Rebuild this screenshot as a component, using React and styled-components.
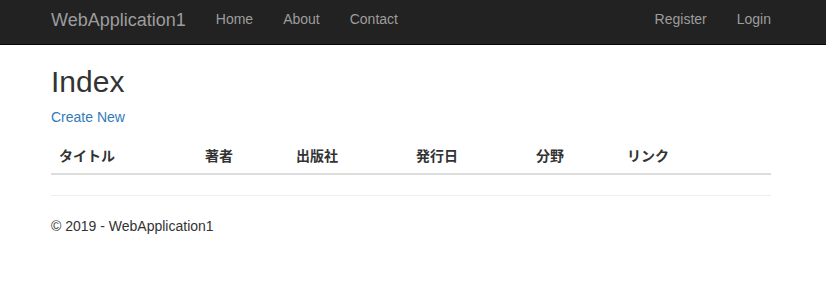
import React from "react";
import styled, { createGlobalStyle } from "styled-components";

const GlobalStyle = createGlobalStyle`
  * { box-sizing: border-box; }
  html, body { margin: 0; padding: 0; background: #fff; }
  body {
    font-family: "Liberation Sans", Arial, "Noto Sans CJK JP", sans-serif;
    font-size: 14px;
    line-height: 20px;
    color: #333;
  }
`;

const Navbar = styled.nav`
  background: #222;
  border-bottom: 1px solid #080808;
  height: 45px;
`;

const NavContainer = styled.div`
  width: 750px;
  margin-left: 36px;
  display: flex;
  align-items: stretch;
  height: 44px;
`;

const Brand = styled.a`
  display: block;
  padding: 0 15px;
  font-size: 18px;
  line-height: 40px;
  color: #9d9d9d;
  text-decoration: none;
`;

const NavList = styled.ul`
  list-style: none;
  margin: 0;
  padding: 0;
  display: flex;
  margin-left: ${(p) => (p.$right ? "auto" : "0")};
`;

const NavLink = styled.a`
  display: block;
  padding: 9px 15px;
  line-height: 20px;
  color: #9d9d9d;
  text-decoration: none;
`;

const Container = styled.div`
  width: 750px;
  margin-left: 36px;
  padding: 0 15px;
`;

const Title = styled.h2`
  margin: 20px 0 9px;
  font-size: 30px;
  font-weight: 500;
  line-height: 33px;
  color: #333;
`;

const Para = styled.p`
  margin: 0 0 10px;
`;

const Link = styled.a`
  color: #337ab7;
  text-decoration: none;
`;

const Table = styled.table`
  width: 100%;
  border-collapse: collapse;
  border-spacing: 0;
  margin-bottom: 20px;
`;

const Th = styled.th`
  width: ${(p) => p.$w}px;
  padding: 8px;
  text-align: left;
  vertical-align: bottom;
  line-height: 20px;
  font-weight: bold;
  font-family: "Noto Sans CJK JP", "Liberation Sans", sans-serif;
  border-bottom: 2px solid #ddd;
  color: #333;
`;

const Rule = styled.hr`
  margin: 20px 0;
  border: 0;
  border-top: 1px solid #eee;
`;

const Footer = styled.footer`
  p { margin: 0 0 10px; }
`;

const columns = [
  ["タイトル", 146],
  ["著者", 91],
  ["出版社", 120],
  ["発行日", 120],
  ["分野", 91],
  ["リンク", 152],
];

export default function App() {
  return (
    <>
      <GlobalStyle />
      <Navbar>
        <NavContainer>
          <Brand href="#">WebApplication1</Brand>
          <NavList>
            <li><NavLink href="#">Home</NavLink></li>
            <li><NavLink href="#">About</NavLink></li>
            <li><NavLink href="#">Contact</NavLink></li>
          </NavList>
          <NavList $right>
            <li><NavLink href="#">Register</NavLink></li>
            <li><NavLink href="#">Login</NavLink></li>
          </NavList>
        </NavContainer>
      </Navbar>
      <Container>
        <Title>Index</Title>
        <Para>
          <Link href="#">Create New</Link>
        </Para>
        <Table>
          <thead>
            <tr>
              {columns.map(([label, w]) => (
                <Th key={label} $w={w}>{label}</Th>
              ))}
            </tr>
          </thead>
          <tbody></tbody>
        </Table>
        <Rule />
        <Footer>
          <p>© 2019 - WebApplication1</p>
        </Footer>
      </Container>
    </>
  );
}
